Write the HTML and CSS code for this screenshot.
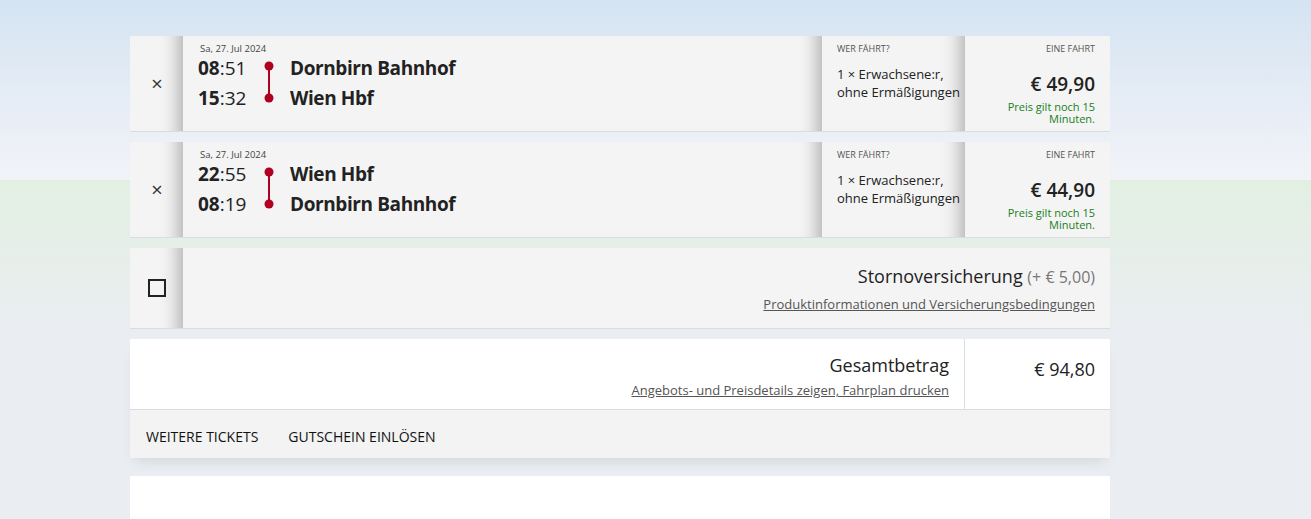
FILE: index.html
```html
<!DOCTYPE html>
<html lang="de">
<head>
    <meta charset="UTF-8">
    <meta name="viewport" content="width=device-width, initial-scale=1.0">
    <title>Warenkorb</title>
    <link rel="stylesheet" href="styles.css">
</head>
<body>
    <div class="backdrop">
        <div class="cart">

            <div class="trip">
                <div class="side"><span class="remove">&times;</span></div>
                <div class="journey">
                    <div class="date">Sa, 27. Jul 2024</div>
                    <div class="legs">
                        <div class="times">
                            <div><b>08</b>:51</div>
                            <div><b>15</b>:32</div>
                        </div>
                        <svg class="route" width="12" height="44" viewBox="0 0 12 44">
                            <line x1="6" y1="5" x2="6" y2="37" stroke="#b00020" stroke-width="2"/>
                            <circle cx="6" cy="5" r="4.5" fill="#b00020"/>
                            <circle cx="6" cy="37" r="4.5" fill="#b00020"/>
                        </svg>
                        <div class="stations">
                            <div>Dornbirn Bahnhof</div>
                            <div>Wien Hbf</div>
                        </div>
                    </div>
                </div>
                <div class="who">
                    <div class="label">Wer fährt?</div>
                    <div class="people">1 &times; Erwachsene:r,<br>ohne Ermäßigungen</div>
                </div>
                <div class="price">
                    <div class="label">Eine Fahrt</div>
                    <div class="amount">€ 49,90</div>
                    <div class="valid">Preis gilt noch 15<br>Minuten.</div>
                </div>
            </div>

            <div class="trip">
                <div class="side"><span class="remove">&times;</span></div>
                <div class="journey">
                    <div class="date">Sa, 27. Jul 2024</div>
                    <div class="legs">
                        <div class="times">
                            <div><b>22</b>:55</div>
                            <div><b>08</b>:19</div>
                        </div>
                        <svg class="route" width="12" height="44" viewBox="0 0 12 44">
                            <line x1="6" y1="5" x2="6" y2="37" stroke="#b00020" stroke-width="2"/>
                            <circle cx="6" cy="5" r="4.5" fill="#b00020"/>
                            <circle cx="6" cy="37" r="4.5" fill="#b00020"/>
                        </svg>
                        <div class="stations">
                            <div>Wien Hbf</div>
                            <div>Dornbirn Bahnhof</div>
                        </div>
                    </div>
                </div>
                <div class="who">
                    <div class="label">Wer fährt?</div>
                    <div class="people">1 &times; Erwachsene:r,<br>ohne Ermäßigungen</div>
                </div>
                <div class="price">
                    <div class="label">Eine Fahrt</div>
                    <div class="amount">€ 44,90</div>
                    <div class="valid">Preis gilt noch 15<br>Minuten.</div>
                </div>
            </div>

            <div class="trip insurance">
                <div class="side"><span class="checkbox"></span></div>
                <div class="insurance-body">
                    <div class="insurance-title">Stornoversicherung <span class="extra">(+ € 5,00)</span></div>
                    <a href="#" class="link">Produktinformationen und Versicherungsbedingungen</a>
                </div>
            </div>

            <div class="summary">
                <div class="total">
                    <div class="total-text">
                        <div class="total-title">Gesamtbetrag</div>
                        <a href="#" class="link">Angebots- und Preisdetails zeigen, Fahrplan drucken</a>
                    </div>
                    <div class="total-amount">€ 94,80</div>
                </div>
                <div class="actions">
                    <a href="#" class="action">Weitere Tickets</a>
                    <a href="#" class="action">Gutschein einlösen</a>
                </div>
            </div>

            <div class="next-box"></div>
        </div>
    </div>
</body>
</html>
```

FILE: styles.css
```css
body {
    margin: 0;
    font-family: "Open Sans", "Noto Sans", sans-serif;
    color: #222;
}
.backdrop {
    height: 483px;
    padding-top: 36px;
    overflow: hidden;
    background:
        linear-gradient(180deg, #d4e4f2 0px, #e9eef6 120px, #f1f3f8 180px, transparent 180px),
        linear-gradient(180deg, #e2f0e2 180px, #e6eeea 260px, #eaedf2 340px, #eaedf2 100%);
}
.cart {
    width: 980px;
    margin-left: 130px;
}
.trip {
    display: flex;
    height: 95px;
    background: #f4f4f4;
    border-bottom: 1px solid #dadcde;
    margin-bottom: 10px;
}
.side {
    width: 53px;
    flex: none;
    display: flex;
    align-items: center;
    justify-content: center;
    box-shadow: inset -22px 0 18px -18px rgba(0,0,0,0.3);
}
.remove {
    font-size: 20px;
    line-height: 1;
    color: #333;
    margin-left: 1px;
}
.journey {
    flex: 1;
    padding: 6px 0 0 17px;
    box-shadow: inset -22px 0 18px -18px rgba(0,0,0,0.3);
}
.date {
    font-size: 9.5px;
    color: #444;
    line-height: 12px;
    margin-top: 1px;
}
.legs {
    display: flex;
    align-items: flex-start;
}
.times, .stations {
    font-size: 19px;
    line-height: 30px;
    margin-top: -2px;
}
.times {
    width: 65px;
    margin-left: -2px;
}
.times b, .stations {
    font-weight: 700;
}
.route {
    margin-top: 6px;
}
.stations {
    margin-left: 15px;
    letter-spacing: -0.4px;
}
.who {
    width: 143px;
    flex: none;
    padding: 7px 0 0 15px;
    box-sizing: border-box;
    box-shadow: inset -22px 0 18px -18px rgba(0,0,0,0.3);
}
.label {
    font-size: 9px;
    text-transform: uppercase;
    color: #555;
    line-height: 12px;
}
.price .label {
    margin-top: 1px;
}
.people {
    margin-top: 10px;
    font-size: 13px;
    line-height: 18px;
    white-space: nowrap;
}
.price {
    width: 143px;
    flex: none;
    margin-left: 2px;
    padding: 6px 15px 0 0;
    box-sizing: border-box;
    text-align: right;
}
.amount {
    margin-top: 16px;
    font-size: 19px;
    font-weight: 600;
    line-height: 26px;
}
.valid {
    margin-top: 4px;
    font-size: 11px;
    line-height: 12px;
    color: #17801a;
}
.insurance {
    height: 80px;
}
.checkbox {
    width: 14px;
    height: 14px;
    border: 2px solid #222;
    margin-left: 1px;
}
.insurance-body {
    flex: 1;
    text-align: right;
    padding: 15px 15px 0 0;
}
.insurance-title {
    font-size: 18px;
    line-height: 26px;
}
.extra {
    color: #777;
    font-size: 16px;
}
.link {
    display: inline-block;
    margin-top: 5px;
    font-size: 13px;
    color: #555;
    text-decoration: underline;
}
.summary {
    margin-bottom: 18px;
    box-shadow: 0 8px 14px -6px rgba(0,0,0,0.12);
}
.total {
    display: flex;
    height: 70px;
    background: #fff;
    border-bottom: 1px solid #dadcde;
}
.total-text {
    flex: 1;
    text-align: right;
    padding: 13px 15px 0 0;
    border-right: 1px solid #dadcde;
}
.total-title {
    font-size: 18px;
    line-height: 26px;
}
.total-text .link {
    margin-top: -3px;
}
.total-amount {
    width: 145px;
    box-sizing: border-box;
    text-align: right;
    padding: 17px 15px 0 0;
    font-size: 18px;
    line-height: 26px;
}
.actions {
    display: flex;
    gap: 30px;
    height: 48px;
    align-items: center;
    padding-left: 16px;
    background: #f3f3f3;
}
.action {
    font-size: 14px;
    color: #111;
    text-decoration: none;
    text-transform: uppercase;
    margin-top: 4px;
}
.next-box {
    height: 60px;
    background: #fff;
}
```
